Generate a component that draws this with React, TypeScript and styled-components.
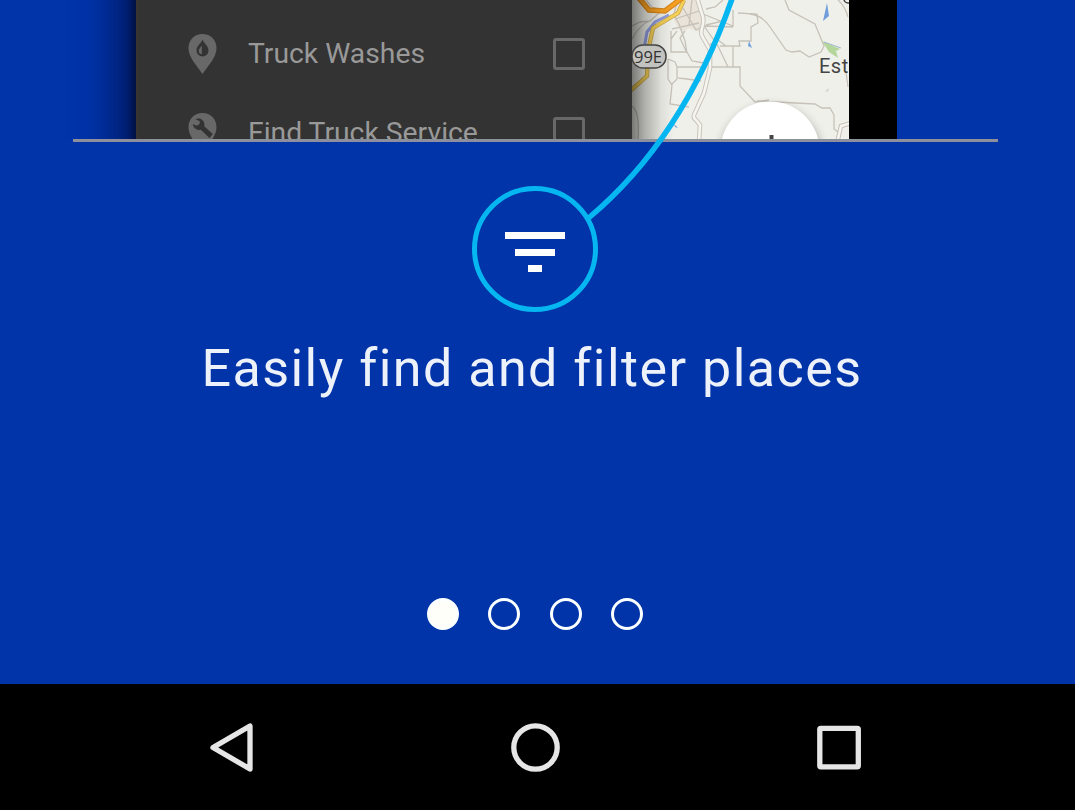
import React from "react";
import styled, { createGlobalStyle } from "styled-components";

const GlobalStyle = createGlobalStyle`
  *, *::before, *::after { box-sizing: border-box; }
  body { margin: 0; background: #0133a9; font-family: Roboto, "Liberation Sans", sans-serif; }
`;

const Screen = styled.div`
  position: relative;
  display: flex;
  flex-direction: column;
  width: 1075px;
  height: 810px;
  overflow: hidden;
  background: #0133a9;
`;

const Preview = styled.section`
  display: flex;
  height: 139px;
  padding-left: 136px;
  overflow: hidden;
`;

const Phone = styled.div`
  display: flex;
  flex: none;
  width: 761px;
  height: 339px;
  margin-top: -100px;
  padding-top: 100px;
  box-shadow: -4px 0 8px -1px rgba(0, 5, 25, 0.6), -22px 0 36px -4px rgba(0, 5, 40, 0.6);
  clip-path: inset(0 0 0 -70px);
  background: #000;
`;

const Drawer = styled.ul`
  width: 496px;
  margin: 0;
  padding: 14px 47px 0 49.5px;
  list-style: none;
  background: #333;
  border-left: 2px solid #393331;
`;

const FilterRow = styled.li`
  display: flex;
  align-items: center;
  height: 79.5px;
`;

const RowLabel = styled.span`
  flex: 1;
  margin-left: 31.5px;
  color: #999;
  font-size: 28.3px;
  line-height: 40px;
  white-space: nowrap;
`;

const Checkbox = styled.span`
  width: 32px;
  height: 32px;
  border: 3.5px solid #686868;
  border-radius: 3px;
`;

const PinIcon = styled.svg`
  flex: none;
  width: 29px;
  height: 40px;
`;

const MapView = styled.svg`
  display: block;
  flex: none;
  width: 217px;
  height: 139px;
`;

const Divider = styled.hr`
  flex: none;
  width: 925px;
  height: 3px;
  margin: 0 0 0 73px;
  border: 0;
  background: #8d8f9c;
`;

const Feature = styled.main`
  display: flex;
  flex: 1;
  flex-direction: column;
  align-items: center;
  padding: 44px 5px 0 0;
`;

const FilterBadge = styled.div`
  display: flex;
  flex-direction: column;
  align-items: center;
  gap: 9.5px;
  width: 126px;
  height: 126px;
  padding-top: 41px;
  border: 5px solid #05b6f1;
  border-radius: 50%;
`;

const FilterBar = styled.span<{ $width: number }>`
  width: ${(p) => p.$width}px;
  height: 7px;
  background: #fff;
`;

const Title = styled.h1`
  margin: 25px 0 0;
  padding-right: 6px;
  color: #edf1fa;
  font-size: 52px;
  font-weight: 400;
  line-height: 64px;
  letter-spacing: 1.47px;
  white-space: nowrap;
`;

const Pager = styled.div`
  display: flex;
  gap: 29.5px;
  margin-top: auto;
  margin-bottom: 54px;
`;

const Dot = styled.span<{ $active?: boolean }>`
  width: 32px;
  height: 32px;
  border: 3px solid #fbffff;
  border-radius: 50%;
  background: ${(p) => (p.$active ? "#fffffa" : "transparent")};
`;

const NavBar = styled.nav`
  display: flex;
  flex: none;
  align-items: center;
  justify-content: space-between;
  height: 126px;
  padding: 0 206px 0 202px;
  background: #000;
`;

const NavIcon = styled.svg`
  width: 60px;
  height: 60px;
  fill: none;
  stroke: #e6e6e6;
  stroke-width: 5.3;
  stroke-linejoin: round;
`;

const Connector = styled.svg`
  position: absolute;
  top: 0;
  left: 580px;
  width: 170px;
  height: 225px;
  pointer-events: none;
`;

const pinShape = "M14.5 0C6.5 0 .5 6 .5 14c0 9.5 8 17 14 26 6-9 14-16.500 14-26 0-8-6-14-14-14z";
const mainRoad = "M697-2l6 19c2 9-4 13-1 19l8 14v18l-6 25-10 22q-1 3 2 5l4 5-1 16";

function WashPin() {
  return (
    <PinIcon viewBox="0 0 29 40">
      <path d={pinShape} fill="#686868" />
      <path d="M14.500 5.500C13.500 9 8.500 11.500 8.500 16.500a6 6 0 0 0 12 0C20.500 11.500 15.500 9 14.500 5.500z" fill="#333" />
      <path d="M13.800 11.500c-1.500 2-3 3.300-3 5.500 0 1.800 1.300 3 3 3.300z" fill="#686868" />
    </PinIcon>
  );
}

function ServicePin() {
  return (
    <PinIcon viewBox="0 0 29 40">
      <path d={pinShape} fill="#686868" />
      <path
        d="M7.500 6.200c3.500-1.800 8.300.3 8.900 4.700.1.900 0 1.600-.2 2.300l8.600 7.800-3.300 4-8.700-8.300c-3.800.9-7.400-1.600-8-5.700l4 1.700 2.800-1.600.2-2.900z"
        fill="#333"
      />
    </PinIcon>
  );
}

function AreaMap() {
  return (
    <MapView viewBox="632 0 217 139">
      <defs>
        <linearGradient id="drawerShade">
          <stop offset="0" stopColor="#000" stopOpacity="0.5" />
          <stop offset="0.3" stopColor="#000" stopOpacity="0.27" />
          <stop offset="0.7" stopColor="#000" stopOpacity="0.07" />
          <stop offset="1" stopColor="#000" stopOpacity="0" />
        </linearGradient>
        <filter id="buttonShadow" x="-30%" y="-30%" width="160%" height="160%">
          <feGaussianBlur stdDeviation="5" />
        </filter>
      </defs>
      <rect x="632" y="0" width="217" height="139" fill="#f0f0ea" />
      <path d="M673 0h27l3 12 2 8-3 13-13-5-7 5-8-12z" fill="#e9e3d9" />
      <g fill="none" stroke="#c6c2b9" strokeWidth="1.300">
        <path d="M632 26l8-4 10-1 10-9M632 39q8-15 18-18M671 31v21h16l5 9 12 2M668 59v20l4 6-2 19 19 3M677 31l-6 8M677 0l-3 15 5 9 6 17 2 12M685 31l-5 7 7 15M683 8l13 22 6-3M692 0l-3 25M675 19l24-8M672 29l27-6" />
        <path d="M668 59l7 3 2 5v11l10 1 14 2M677 67h28M677 79l-6 6M706 25l21-5M703 14l30 12V10M704 26l29 1M709 45l9-5 8 6M704 26l14 20 10 21M720 46h20l-1-5h12V27l7-4-1-9-19-1M733 46v21M708 67h32v19l15 16 14-2" />
        <path d="M750 14q12 1 20 13l16 23 6 2 8-1 9 6 12-5 3-6-9-22-26-14-4-10M757 101l58 3 7 4h8l4 7v14l4 3M838 0q7 6 10 17M846 72l2 15M646 0l6 7 9 3M632 106q8 6 6 33M723 0l-8 7-9 2" />
      </g>
      <path d={mainRoad} fill="none" stroke="#c8c4bc" strokeWidth="4.600" />
      <path d={mainRoad} fill="none" stroke="#f6f4ef" strokeWidth="2.600" />
      <path d="M838 139l3-13 10-3" fill="none" stroke="#c4bfb6" strokeWidth="4.600" />
      <path d="M838 139l3-13 10-3" fill="none" stroke="#f6f4ef" strokeWidth="2.600" />
      <path d="M644 49l3-17 8-10 14-7" fill="none" stroke="#909ce0" strokeWidth="3" />
      <path d="M629 92l18-16 1-25 5-23 25-15 6-13" fill="none" stroke="#c9a650" strokeWidth="4.300" />
      <path d="M629 92l18-16 1-25 5-23 25-15 6-13" fill="none" stroke="#f4d055" strokeWidth="2.800" />
      <path d="M638-3l11 13 16 1 17-13" fill="none" stroke="#d98a1c" strokeWidth="5.500" />
      <path d="M638-3l11 13 16 1 17-13" fill="none" stroke="#f79f20" strokeWidth="3" />
      <path d="M827 3l-4 18 6-5zM749 41l3 7-4-2zM674 124l4 4-3-1z" fill="#6f9edc" />
      <path d="M822 41l18 8-4 2 2 7-9-6z" fill="#b4d69a" />
      <path d="M824 42l17 6" stroke="#9cb7ce" />
      <path d="M825 91l4-3-1 4" fill="#d5d5d0" />
      <circle cx="848" cy="-1" r="4" fill="none" stroke="#444" strokeWidth="1.500" />
      <text x="819" y="72.500" fill="#444" fontSize="20" fontFamily="Roboto" letterSpacing="0.5">Esta</text>
      <rect x="632" y="0" width="42" height="139" fill="url(#drawerShade)" />
      <rect x="632" y="45" width="34" height="23" rx="11" fill="#c2c2be" stroke="#444" strokeWidth="1.500" />
      <text x="634" y="62.500" fill="#333" fontSize="16.500" fontFamily="Open Sans">99E</text>
      <circle cx="771" cy="156" r="51" fill="#000" opacity="0.24" filter="url(#buttonShadow)" />
      <circle cx="770" cy="151" r="49.500" fill="#fff" />
      <path d="M769.500 135h4v5h-4z" fill="#444" />
    </MapView>
  );
}

export default function App() {
  return (
    <>
      <GlobalStyle />
      <Screen>
        <Preview>
          <Phone>
            <Drawer>
              <FilterRow>
                <WashPin />
                <RowLabel>Truck Washes</RowLabel>
                <Checkbox />
              </FilterRow>
              <FilterRow>
                <ServicePin />
                <RowLabel>Find Truck Service</RowLabel>
                <Checkbox />
              </FilterRow>
            </Drawer>
            <AreaMap />
          </Phone>
        </Preview>
        <Divider />
        <Feature>
          <FilterBadge>
            <FilterBar $width={60} />
            <FilterBar $width={40} />
            <FilterBar $width={14} />
          </FilterBadge>
          <Title>Easily find and filter places</Title>
          <Pager>
            <Dot $active />
            <Dot />
            <Dot />
            <Dot />
          </Pager>
        </Feature>
        <NavBar>
          <NavIcon viewBox="0 0 60 60">
            <path d="M11 30.500L48 9v43z" />
          </NavIcon>
          <NavIcon viewBox="0 0 60 60">
            <circle cx="29.500" cy="30.500" r="21.700" />
          </NavIcon>
          <NavIcon viewBox="0 0 60 60">
            <rect x="10.800" y="11.300" width="38.500" height="38.500" rx="1" />
          </NavIcon>
        </NavBar>
        <Connector viewBox="580 0 170 225">
          <path d="M733-4C711 60 670 150 588 218.500" fill="none" stroke="#05b6f1" strokeWidth="5.500" />
        </Connector>
      </Screen>
    </>
  );
}
